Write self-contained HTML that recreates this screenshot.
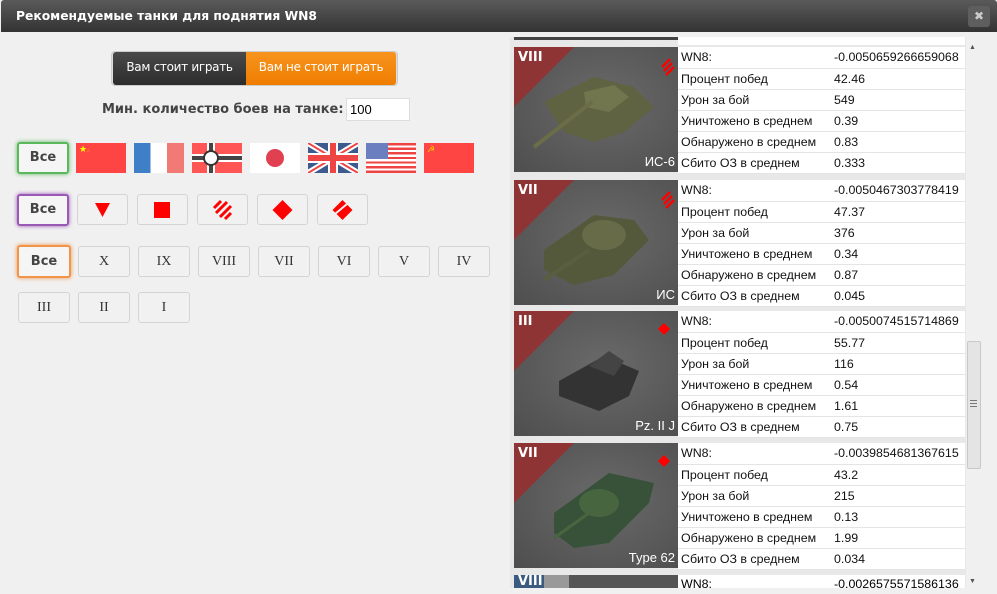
<!DOCTYPE html>
<html><head><meta charset="utf-8"><style>
*{margin:0;padding:0;box-sizing:border-box}
body{width:997px;height:594px;background:#f0f0f0;font-family:"Liberation Sans","DejaVu Sans",sans-serif;position:relative;overflow:hidden}
.title{position:absolute;left:1px;top:0;width:996px;height:32px;background:linear-gradient(#5a5a5a,#333);border-radius:3px 3px 0 0;color:#fff;font-weight:bold;font-size:12.3px;padding:9px 0 0 15px;font-family:"DejaVu Sans",sans-serif}
.close{position:absolute;left:968px;top:6px;width:22px;height:21px;background:#5e5e5e;border-radius:3px;color:#ccc;font-size:12px;text-align:center;line-height:21px;font-weight:bold}
.tog{position:absolute;top:52px;height:33px;font-size:12px;color:#fff;line-height:31px;text-align:center;font-family:"DejaVu Sans",sans-serif;letter-spacing:-0.3px}
.abs{position:absolute}
.b{position:absolute;border:1px solid #d4d4d4;border-radius:3px;background:#f1f1f1;text-align:center;font-family:"Liberation Serif",serif;font-size:14px;color:#333}
.all{font-family:"DejaVu Sans",sans-serif;font-weight:bold;font-size:13px;color:#444;background:#f5f5f5}
.flag{position:absolute;top:143px;width:50px;height:30px;overflow:hidden}
.card{position:absolute;left:514px;width:451px;height:125px}
.img{position:absolute;left:0;top:0;width:164px;height:125px;background:radial-gradient(ellipse at 55% 45%,#6a6a6a,#4e4e4e);overflow:hidden}
.tier{position:absolute;left:4px;top:3px;color:#fff;font-weight:bold;font-size:13px;font-family:"DejaVu Sans",sans-serif}
.nm{position:absolute;right:3px;bottom:3px;color:#fff;font-size:13px}
table{position:absolute;left:164px;top:0;width:287px;border-collapse:collapse;background:#fff}
td{height:21px;font-size:12.4px;color:#111;border-bottom:1px solid #e4e4e4;padding:0 3px;white-space:nowrap}
td:first-child{width:153px}
</style></head><body>
<div class="title">Рекомендуемые танки для поднятия WN8</div>
<div class="close">✖</div>

<div class="abs" style="left:111px;top:51px;width:287px;height:35px;border:1px solid #ccc;border-radius:4px;background:#ddd"></div>
<div class="tog" style="left:113px;width:133px;background:linear-gradient(#4a4a4a,#2c2c2c);border-radius:3px 0 0 3px">Вам стоит играть</div>
<div class="tog" style="left:246px;width:150px;background:linear-gradient(#f7941e,#ef7d00);border-radius:0 3px 3px 0">Вам не стоит играть</div>

<div class="abs" style="left:102px;top:102px;font-size:13px;font-weight:bold;color:#444;font-family:'DejaVu Sans',sans-serif">Мин. количество боев на танке:</div>
<div class="abs" style="left:346px;top:98px;width:64px;height:23px;background:#fff;border:1px solid #ddd;font-size:13px;padding:3px 3px">100</div>

<div class="b all" style="left:17px;top:142px;width:52px;height:32px;border:2px solid #5cb85c;box-shadow:0 0 4px #5cb85c;line-height:28px">Все</div>
<div class="flag" style="left:76px;background:#f44"><span style="position:absolute;left:3px;top:1px;color:#ff0;font-size:9px">★<span style="font-size:5px">∴</span></span></div>
<div class="flag" style="left:134px;background:linear-gradient(90deg,#3f7fc8 0 33%,#fff 33% 66%,#f27a75 66%)"></div>
<div class="flag" style="left:192px;background:#f55"><div class="abs" style="left:0;top:11px;width:50px;height:8px;background:#fff"></div><div class="abs" style="left:0;top:13px;width:50px;height:4px;background:#444"></div><div class="abs" style="left:15px;top:0;width:8px;height:30px;background:#fff"></div><div class="abs" style="left:17px;top:0;width:4px;height:30px;background:#444"></div><div class="abs" style="left:11px;top:7px;width:16px;height:16px;border-radius:50%;background:#fff;border:2px solid #333"></div></div>
<div class="flag" style="left:250px;background:#fff"><div class="abs" style="left:16px;top:6px;width:18px;height:18px;border-radius:50%;background:#e04050"></div></div>
<div class="flag" style="left:308px"><svg width="50" height="30"><rect width="50" height="30" fill="#3d5a8e"/><path d="M0 0L50 30M50 0L0 30" stroke="#fff" stroke-width="6"/><path d="M0 0L50 30M50 0L0 30" stroke="#e44" stroke-width="2"/><path d="M25 0V30M0 15H50" stroke="#fff" stroke-width="10"/><path d="M25 0V30M0 15H50" stroke="#e44" stroke-width="6"/></svg></div>
<div class="flag" style="left:366px;background:repeating-linear-gradient(#e44 0 2.3px,#fff 2.3px 4.6px)"><div class="abs" style="left:0;top:0;width:22px;height:16px;background:#6b7fc0"></div></div>
<div class="flag" style="left:424px;background:#f44"><span style="position:absolute;left:3px;top:1px;color:#fc0;font-size:9px">☭</span></div>

<div class="b all" style="left:17px;top:194px;width:52px;height:32px;border:2px solid #9b59b6;box-shadow:0 0 4px #9b59b6;line-height:28px">Все</div>
<div class="b" style="left:77px;top:194px;width:51px;height:31px"><svg width="49" height="29"><path d="M17 8H32L24.5 22Z" fill="red"/></svg></div>
<div class="b" style="left:137px;top:194px;width:51px;height:31px"><svg width="49" height="29"><rect x="16" y="7" width="16" height="16" fill="red"/></svg></div>
<div class="b" style="left:197px;top:194px;width:51px;height:31px"><svg width="49" height="29"><path d="M16 13L23 6M18 18L29 7M22 22L33 11M27 24L33 18" stroke="red" stroke-width="3"/></svg></div>
<div class="b" style="left:257px;top:194px;width:51px;height:31px"><svg width="49" height="29"><path d="M24.5 5L34.5 15L24.5 25L14.5 15Z" fill="red"/></svg></div>
<div class="b" style="left:317px;top:194px;width:51px;height:31px"><svg width="49" height="29"><path d="M24.5 5L34.5 15L24.5 25L14.5 15Z" fill="red"/><path d="M17 19L29 9" stroke="#f1f1f1" stroke-width="2"/></svg></div>

<div class="b all" style="left:17px;top:245px;width:54px;height:33px;border:2px solid #f0954a;box-shadow:0 0 4px #f0954a;line-height:29px">Все</div>
<div class="b" style="left:78px;top:246px;width:52px;height:31px;line-height:29px">X</div>
<div class="b" style="left:138px;top:246px;width:52px;height:31px;line-height:29px">IX</div>
<div class="b" style="left:198px;top:246px;width:52px;height:31px;line-height:29px">VIII</div>
<div class="b" style="left:258px;top:246px;width:52px;height:31px;line-height:29px">VII</div>
<div class="b" style="left:318px;top:246px;width:52px;height:31px;line-height:29px">VI</div>
<div class="b" style="left:378px;top:246px;width:52px;height:31px;line-height:29px">V</div>
<div class="b" style="left:438px;top:246px;width:52px;height:31px;line-height:29px">IV</div>
<div class="b" style="left:18px;top:292px;width:52px;height:31px;line-height:29px">III</div>
<div class="b" style="left:78px;top:292px;width:52px;height:31px;line-height:29px">II</div>
<div class="b" style="left:138px;top:292px;width:52px;height:31px;line-height:29px">I</div>

<div class="abs" style="left:510px;top:37px;width:456px;height:551px;background:#e8e8e8"></div>
<div class="abs" style="left:514px;top:37px;width:164px;height:3px;background:#444"></div>
<div class="abs" style="left:678px;top:37px;width:287px;height:8px;background:#fff"></div>

<div class="card" style="top:47px"><div class="img"><svg class="abs" width="164" height="125"><path d="M0 0H60L0 60Z" fill="#8f3434"/><path d="M30 55L80 30L120 40L140 60L110 85L80 95L50 85Z" fill="#5f6342"/><path d="M70 45L100 38L115 50L95 65L72 60Z" fill="#72764e"/><path d="M78 55L20 100" stroke="#6a6d48" stroke-width="4"/><path d="M148 20L156 12M150 24L158 16M152 28L160 20" stroke="red" stroke-width="2.5"/></svg><div class="tier">VIII</div><div class="nm">ИС-6</div></div>
<table><tr><td>WN8:</td><td>-0.0050659266659068</td></tr><tr><td>Процент побед</td><td>42.46</td></tr><tr><td>Урон за бой</td><td>549</td></tr><tr><td>Уничтожено в среднем</td><td>0.39</td></tr><tr><td>Обнаружено в среднем</td><td>0.83</td></tr><tr><td>Сбито ОЗ в среднем</td><td>0.333</td></tr></table></div>

<div class="card" style="top:180px"><div class="img"><svg class="abs" width="164" height="125"><path d="M0 0H60L0 60Z" fill="#8f3434"/><path d="M30 70L80 35L120 40L135 60L100 95L60 105L30 90Z" fill="#55593c"/><ellipse cx="90" cy="55" rx="22" ry="15" fill="#676b48"/><path d="M75 70L30 100" stroke="#5a5e40" stroke-width="4"/><path d="M148 20L156 12M150 24L158 16M152 28L160 20" stroke="red" stroke-width="2.5"/></svg><div class="tier">VII</div><div class="nm">ИС</div></div>
<table><tr><td>WN8:</td><td>-0.0050467303778419</td></tr><tr><td>Процент побед</td><td>47.37</td></tr><tr><td>Урон за бой</td><td>376</td></tr><tr><td>Уничтожено в среднем</td><td>0.34</td></tr><tr><td>Обнаружено в среднем</td><td>0.87</td></tr><tr><td>Сбито ОЗ в среднем</td><td>0.045</td></tr></table></div>

<div class="card" style="top:311px"><div class="img"><svg class="abs" width="164" height="125"><path d="M0 0H60L0 60Z" fill="#8f3434"/><path d="M45 70L90 45L125 60L115 85L85 100L45 85Z" fill="#333"/><path d="M75 55L95 40L110 50L100 65Z" fill="#444"/><path d="M150 12L156 18L150 24L144 18Z" fill="red"/></svg><div class="tier">III</div><div class="nm">Pz. II J</div></div>
<table><tr><td>WN8:</td><td>-0.0050074515714869</td></tr><tr><td>Процент побед</td><td>55.77</td></tr><tr><td>Урон за бой</td><td>116</td></tr><tr><td>Уничтожено в среднем</td><td>0.54</td></tr><tr><td>Обнаружено в среднем</td><td>1.61</td></tr><tr><td>Сбито ОЗ в среднем</td><td>0.75</td></tr></table></div>

<div class="card" style="top:443px"><div class="img"><svg class="abs" width="164" height="125"><path d="M0 0H60L0 60Z" fill="#8f3434"/><path d="M40 70L95 30L140 40L135 60L95 100L60 105L40 90Z" fill="#38523a"/><ellipse cx="85" cy="60" rx="20" ry="14" fill="#47663f"/><path d="M75 70L40 95" stroke="#47663f" stroke-width="3"/><path d="M150 12L156 18L150 24L144 18Z" fill="red"/></svg><div class="tier">VII</div><div class="nm">Type 62</div></div>
<table><tr><td>WN8:</td><td>-0.0039854681367615</td></tr><tr><td>Процент побед</td><td>43.2</td></tr><tr><td>Урон за бой</td><td>215</td></tr><tr><td>Уничтожено в среднем</td><td>0.13</td></tr><tr><td>Обнаружено в среднем</td><td>1.99</td></tr><tr><td>Сбито ОЗ в среднем</td><td>0.034</td></tr></table></div>

<div class="abs" style="left:514px;top:575px;width:451px;height:13px;overflow:hidden"><div class="abs" style="left:0;top:0;width:164px;height:13px;background:#555"><div class="abs" style="left:0;top:0;width:30px;height:13px;background:#3a5a80"></div><div class="abs" style="left:30px;top:0;width:25px;height:13px;background:#999"></div><span style="position:absolute;left:4px;top:-1px;color:#fff;font-weight:bold;font-size:13px;font-family:'DejaVu Sans',sans-serif">VIII</span></div><div class="abs" style="left:164px;top:0;width:287px;height:13px;background:#fff;font-size:12.4px;padding:0 3px;line-height:19px">WN8:<span style="position:absolute;left:156px">-0.0026575571586136</span></div></div>

<div class="abs" style="left:966px;top:37px;width:17px;height:551px;background:#f0f0f0"></div>
<div class="abs" style="left:969px;top:44px;color:#555;font-size:7px">▲</div>
<div class="abs" style="left:969px;top:578px;color:#555;font-size:7px">▼</div>
<div class="abs" style="left:967px;top:341px;width:14px;height:128px;background:#e4e4e4;border:1px solid #c8c8c8;border-radius:2px"></div>
<div class="abs" style="left:970px;top:400px;width:7px;height:7px;border-top:1px solid #777;border-bottom:1px solid #777"></div>
<div class="abs" style="left:970px;top:403px;width:7px;height:1px;background:#777"></div>
</body></html>
